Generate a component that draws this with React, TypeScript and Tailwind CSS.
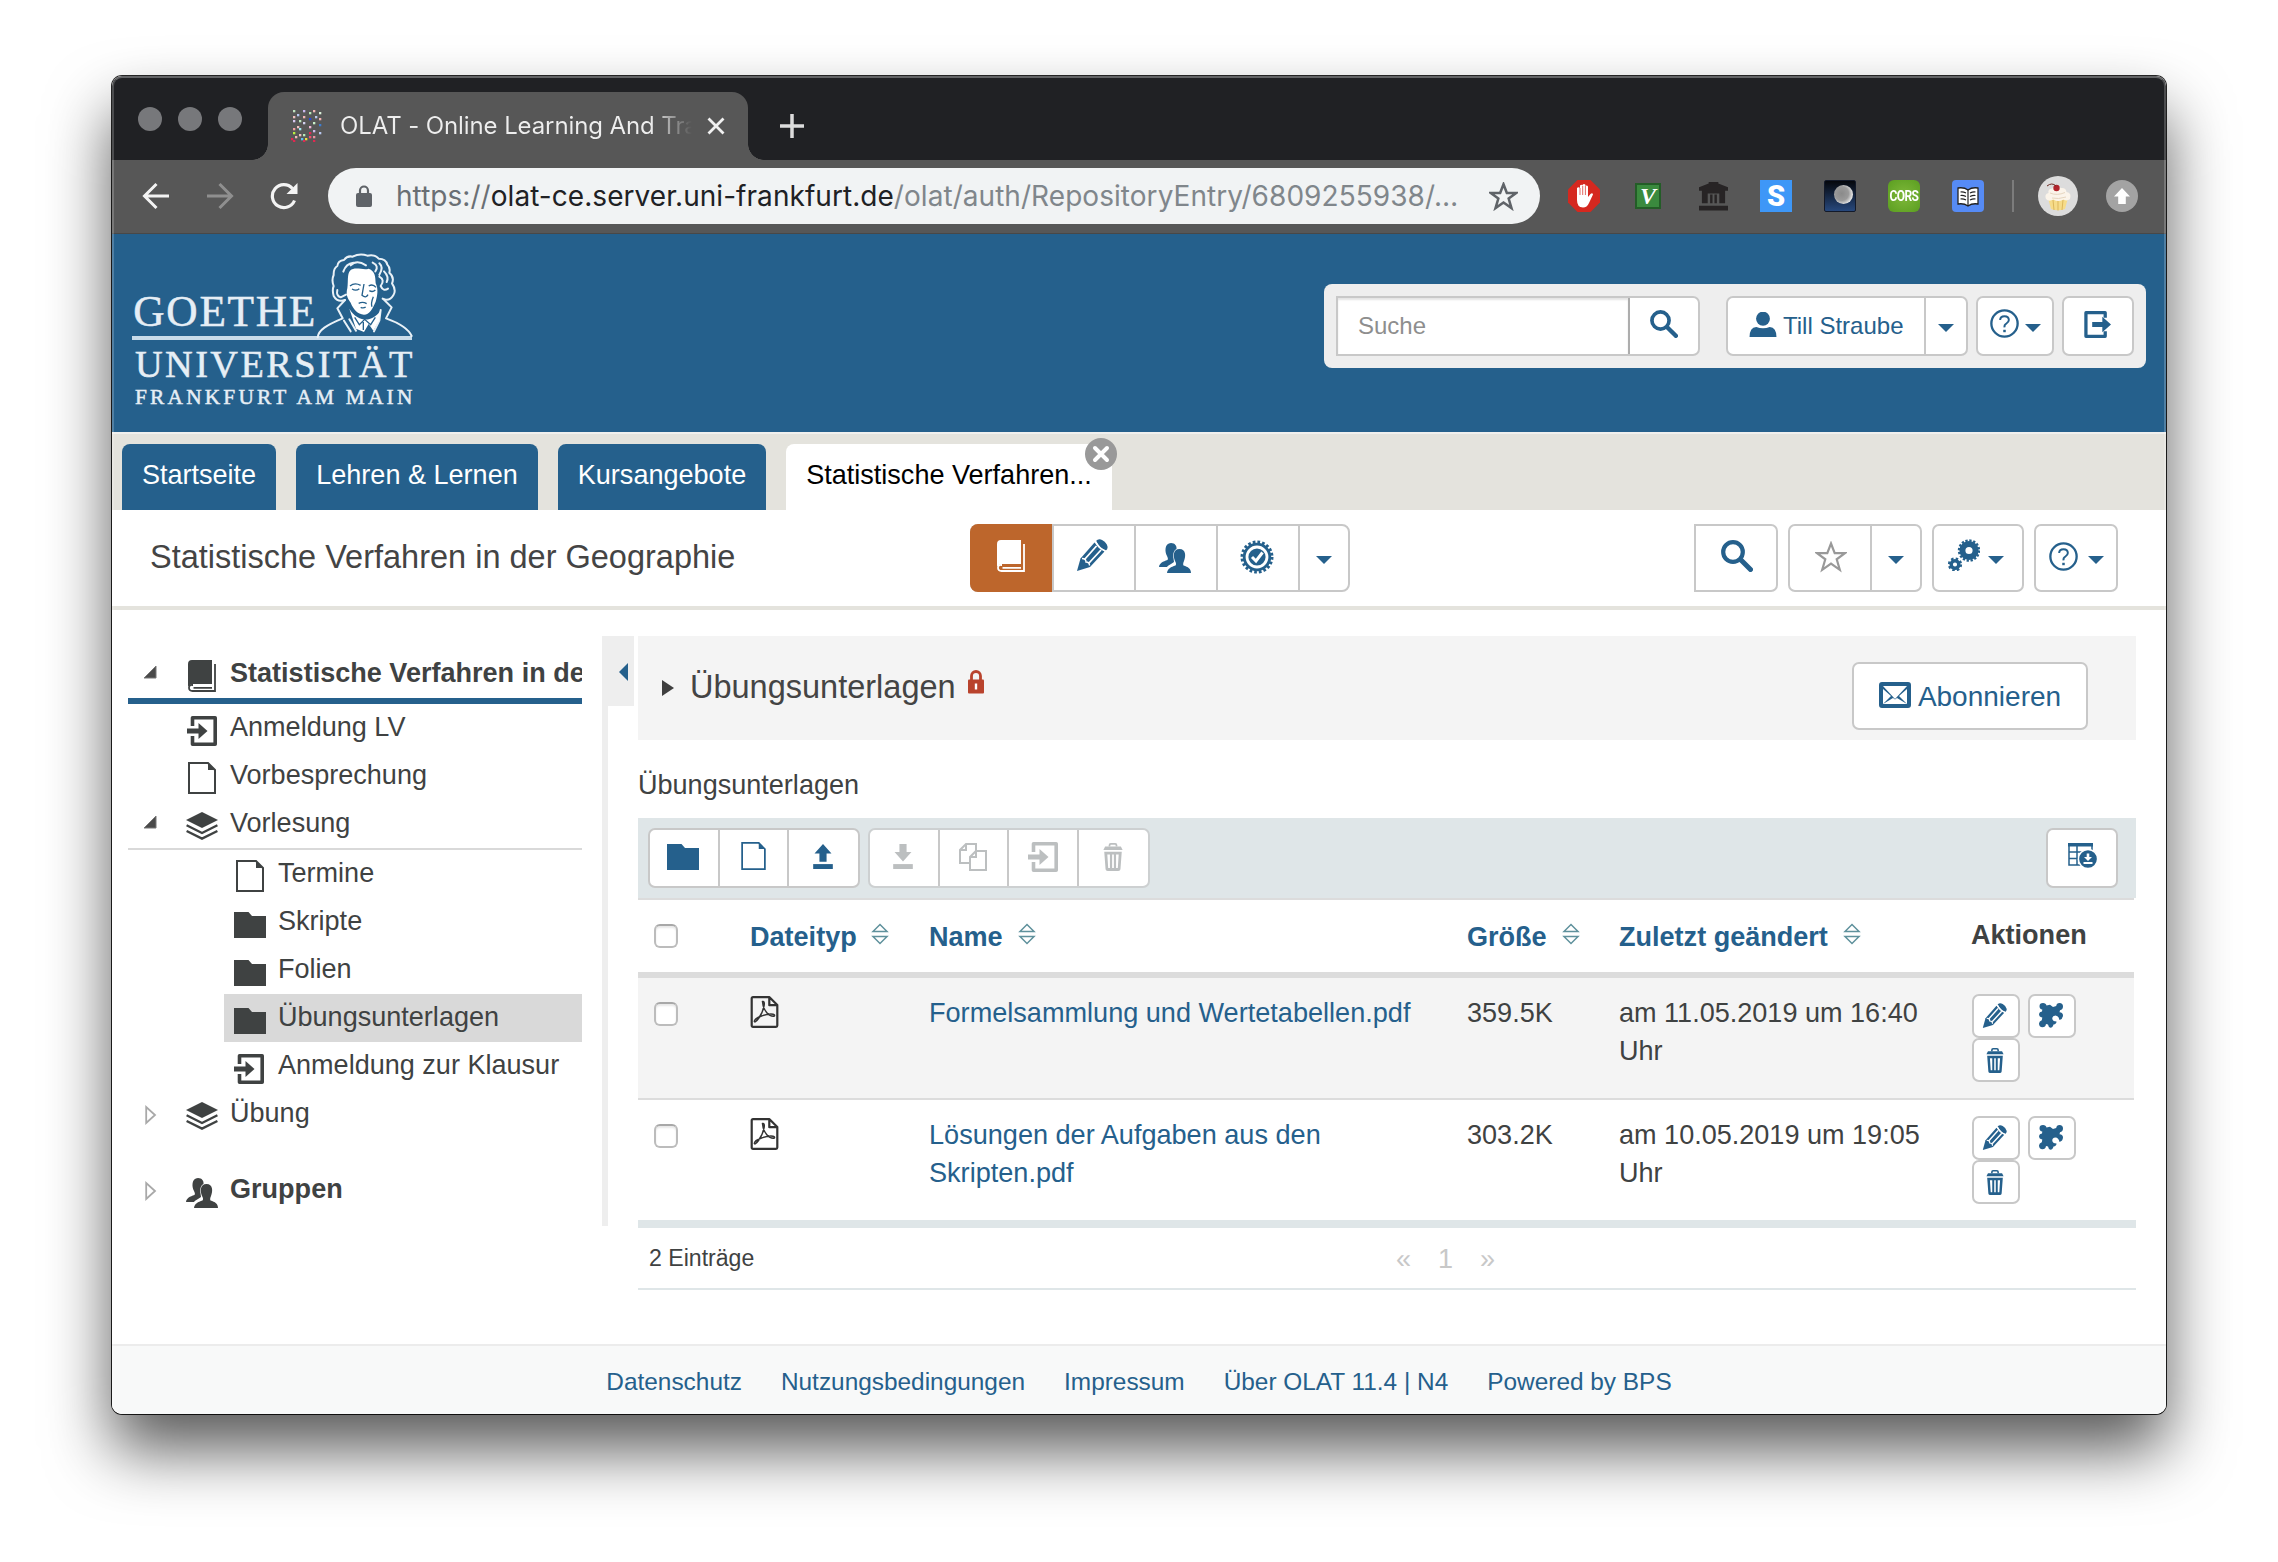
import React from "react";

type P = { className?: string };

const Caret = ({ className = "" }: P) => (
  <svg viewBox="0 0 16 8" className={`h-[8px] w-[16px] shrink-0 fill-[#25608c] ${className}`}>
    <path d="M0 0H16L8 8Z" />
  </svg>
);

const Search = ({ className = "" }: P) => (
  <svg viewBox="0 0 32 32" className={`h-8 w-8 fill-none stroke-[#25608c] ${className}`}>
    <circle cx="12" cy="12" r="9.8" strokeWidth="4.2" />
    <path d="M20.5 20.5L29.5 29.5" strokeWidth="5" strokeLinecap="round" />
  </svg>
);

const Book = ({ className = "" }: P) => (
  <svg viewBox="0 0 28 32" className={`h-8 w-7 ${className}`}>
    <path fill="currentColor" d="M4 0H24V24H4.5Q2 24 0 26.5V4Q0 0 4 0Z" />
    <path fill="none" stroke="currentColor" strokeWidth="1.8" d="M27 4V31H4.5Q1 31 1 27.8T4.5 25H5M5.5 27.8H24" />
  </svg>
);

const Pencil = ({ className = "" }: P) => (
  <svg viewBox="0 0 32 32" className={`h-8 w-8 fill-[#25608c] ${className}`}>
    <path d="M1 32L4.5 19.5L18.5 3.5L28.5 12.5L14 28Z" />
    <path d="M20 2Q22.5-1 26.5 1.2T31.5 7.5Q32 10 29.8 11.5Q25 10.5 20 2Z" />
    <path fill="none" stroke="#fff" strokeWidth="1.8" d="M19.500 2.500Q22 9 29.500 12M8.500 20.500L20.500 7M13 24L25 11" />
    <path fill="none" stroke="#fff" strokeWidth="1.4" d="M6 19.5Q10 19.5 10 23Q13.5 23 13.5 26.5" />
  </svg>
);

const People = ({ className = "" }: P) => (
  <svg viewBox="0 0 32 30" className={`h-[30px] w-8 ${className}`} fill="currentColor">
    <path d="M12 0C16 0 18 3 17.5 6C14 8 14 12 14.5 15.5L15 19C12 21 9 22.5 8 24H0C.5 20 4 18.5 8.5 17C9.5 15.5 8.5 14.500 8 13C5.500 9 5.500 0 12 0Z" />
    <path d="M20.500 6C27 6 27 13 25 18C24 20 24 21.500 24.500 22.500C29 24 32 25.500 32 30H8C8.500 25.500 12 24 16.500 22.500C17.500 21 17 20 16 18C14 13 14 6 20.500 6Z" />
  </svg>
);

const Badge = () => (
  <svg viewBox="0 0 34 34" className="mb-[2px] h-[34px] w-[34px]">
    <circle cx="17" cy="17" r="15" fill="none" stroke="#25608c" strokeWidth="3" strokeDasharray="2.7 2.01" />
    <circle cx="17" cy="17" r="12.800" fill="none" stroke="#25608c" strokeWidth="2.800" />
    <circle cx="17" cy="17" r="8.600" fill="#25608c" />
    <path d="M12 17L16 21L22.500 12.500" fill="none" stroke="#fff" strokeWidth="3" />
  </svg>
);

const Help = () => (
  <svg viewBox="0 0 30 30" className="h-[29px] w-[29px] fill-none stroke-[#25608c]">
    <circle cx="15" cy="15" r="13.600" strokeWidth="2.400" />
    <path d="M10.500 11.500Q10.500 7.500 15 7.500T19.500 11.500Q19.500 13.500 17 15T15 19" strokeWidth="2" />
    <path d="M15 21.500V24" strokeWidth="2.600" />
  </svg>
);

const Gears = () => (
  <svg viewBox="0 0 32 32" className="h-8 w-8 fill-none stroke-[#25608c]">
    <circle cx="21" cy="11.500" r="6.600" strokeWidth="6" />
    <circle cx="21" cy="11.500" r="10" strokeWidth="2.400" strokeDasharray="2.3 1.627" />
    <circle cx="7" cy="25.500" r="3.800" strokeWidth="3.400" />
    <circle cx="7" cy="25.500" r="6" strokeWidth="2.200" strokeDasharray="2.5 2.212" />
  </svg>
);

const Star = ({ className = "" }: P) => (
  <svg viewBox="0 0 32 32" className={`fill-none ${className}`}>
    <path d="M16 2.500L19.700 12.200H30L21.700 18.300L24.800 28.800L16 22.600L7.200 28.800L10.300 18.300L2 12.200H12.300Z" />
  </svg>
);

const Enter = ({ className = "" }: P) => (
  <svg viewBox="0 0 30 30" className={`h-[30px] w-[30px] ${className}`}>
    <path fill="none" stroke="currentColor" strokeWidth="3.600" strokeLinejoin="round" d="M5.500 10V1.800H28.200V28.200H5.500V20" />
    <path fill="currentColor" d="M0 12.500H11.500V7L20.500 15L11.500 23V17.500H0Z" />
  </svg>
);

const Exit = () => (
  <svg viewBox="0 0 28 28" className="h-[27px] w-[27px]">
    <path fill="none" stroke="#25608c" strokeWidth="3.400" strokeLinejoin="round" d="M22 7V1.700H2V26.300H22V21" />
    <path fill="#25608c" d="M8.500 11.500H19V6L28 14L19 22V16.500H8.500Z" />
  </svg>
);

const FileIcon = ({ className = "" }: P) => (
  <svg viewBox="0 0 28 32" className={`h-8 w-7 ${className}`}>
    <path fill="none" stroke="currentColor" strokeWidth="2" d="M1 1H20L27 8V31H1Z" />
    <path fill="currentColor" d="M20 1V8H27Z" />
  </svg>
);

const Folder = ({ className = "" }: P) => (
  <svg viewBox="0 0 32 26" preserveAspectRatio="none" className={`h-[26px] w-8 ${className}`}>
    <path fill="currentColor" d="M0 0H14.500L18 4H32V26H0Z" />
  </svg>
);

const Layers = () => (
  <svg viewBox="0 0 32 28" className="h-7 w-8" fill="currentColor">
    <path d="M16 0L32 8L16 16L0 8Z" />
    <path fill="none" stroke="currentColor" strokeWidth="2.300" d="M.6 13.300L16 21L31.400 13.300M.6 19L16 26.600L31.400 19" />
  </svg>
);

const Trash = ({ className = "" }: P) => (
  <svg viewBox="0 0 22 32" className={className}>
    <path fill="none" stroke="currentColor" strokeWidth="2" d="M7 4V2.500Q7 1 8.500 1H13.500Q15 1 15 2.500V4" />
    <path fill="currentColor" d="M2 4H20L22 8H0Z" />
    <path fill="currentColor" fillRule="evenodd" d="M1 10H21L19.500 30Q19.300 32 17 32H5Q2.700 32 2.500 30ZM4.500 13L5.500 28.500H7.500V13ZM10 13V28.500H12V13ZM14.500 13V28.500H16.500L17.500 13Z" />
  </svg>
);

const Transfer = ({ className = "" }: P) => (
  <svg viewBox="0 0 22 28" className={`h-[25px] w-[22px] fill-current ${className}`}>
    <path d="M0 22.500H22V28H0Z" />
    <path d="M11 0L20.500 10.500H15V20H7V10.500H1.500Z" />
  </svg>
);

const Download = () => (
  <svg viewBox="0 0 22 28" className="mr-[1px] mb-[3px] h-[25px] w-[22px] fill-current">
    <path d="M0 22.500H22V28H0Z" />
    <path d="M7 0H15V9H20.500L11 19.500L1.500 9H7Z" />
  </svg>
);

const Copy = () => (
  <svg viewBox="0 0 28 28" className="mb-[3px] h-[28px] w-[28px] fill-none stroke-current" strokeWidth="2">
    <path d="M11 20H1V7L7 1H17V8M1 7H7V1" />
    <path d="M17 8H27V27H11V14L17 8V14H11" />
  </svg>
);

const TableDown = () => (
  <svg viewBox="0 0 30 26" className="ml-[1px] h-[26px] w-[30px]">
    <path fill="none" stroke="#25608c" strokeWidth="1.500" d="M1 1V22H15M1 9H24M1 15.500H15M9 2V22M24 1V8" />
    <path fill="#25608c" d="M0 0H25V3.500H0Z" />
    <circle cx="20" cy="16" r="9.600" fill="#25608c" stroke="#fff" strokeWidth="1.500" />
    <path fill="#fff" d="M18.700 10.500H21.300V14H24L20 18L16 14H18.700ZM15.500 19H24.500V21H15.500Z" />
  </svg>
);

const Puzzle = () => (
  <svg viewBox="0 0 24 25" className="h-[25px] w-[24px] fill-[#25608c]">
    <path d="M.5 3.200Q.5 0 4 0Q7 0 7.500 2.500L11 1.800L14 4L17.200 3Q17.500 0 20.500 0Q24 0 24 3.500Q24 6.500 21 7.300L20.500 9.300Q24 9.500 24 12.500Q23.800 16 20.500 17Q19.500 12.500 16.500 12.500Q13 12.800 13.300 16Q14 18.500 17.500 18.500Q17.500 21 14.500 21.500Q13.500 24.800 11.500 24.800Q9.500 24.500 9 21.500L7 21Q6.500 24.300 3.500 24.300Q0 24 0 20.500Q.2 18 2.800 17.200L3.300 14.500Q0 14 0 11Q.3 8.800 3 8.500L3.300 6.500Q.5 6 .5 3.200Z" />
  </svg>
);

const Pdf = () => (
  <svg viewBox="0 0 28 32" className="h-8 w-[29px] fill-none stroke-[#333]">
    <path strokeWidth="2.200" strokeLinejoin="round" d="M1.200 2.500Q1.200 1.200 2.500 1.200H19L26.800 9V29.500Q26.800 30.800 25.500 30.800H2.500Q1.200 30.800 1.200 29.500ZM18.800 1.500V9.200H26.500" />
    <path strokeWidth="1.500" d="M12 5.500Q14.500 5 13.500 10Q12.500 16 8 22.500Q4.500 27 3.800 25.500Q4 22.500 11 20Q18 17.500 22.500 18.200Q25 19 23.500 20.200Q19.500 20.500 16.500 17Q12.500 12.500 12 5.500Z" />
  </svg>
);

const Sort = ({ className = "" }: P) => (
  <svg viewBox="0 0 18 22" className={`h-[22px] w-[18px] shrink-0 fill-none stroke-[#5f919c] ${className}`} strokeWidth="1.500">
    <path d="M2 8.500L9 1.500L16 8.500ZM2 13.500H16L9 20.500Z" />
  </svg>
);

const Check = () => (
  <div className="h-6 w-6 rounded-[6px] border-2 border-[#bcbcbc] border-t-[#a8a8a8] bg-white shadow-[inset_0_2px_2px_#e8e8e8]" />
);

const Logo = () => (
  <svg viewBox="96 72 840 450" className="h-[150px] w-[280px] overflow-visible" fill="#fff" fontFamily="'Liberation Serif', serif">
    <g fill="#e6eef5" stroke="#e6eef5" strokeWidth="1.500">
      <text x="100" y="288" fontSize="130" textLength="546">GOETHE</text>
      <text x="105" y="441" fontSize="115" textLength="832">UNIVERSITÄT</text>
      <text x="105" y="521" fontSize="64" textLength="832">FRANKFURT AM MAIN</text>
    </g>
    <path d="M96 318H936V330H96Z" fill="#c9dcea" />
    <g fill="none" stroke="#e9f1f7" strokeWidth="6" strokeLinecap="round" strokeLinejoin="round">
      <path d="M653 322C655 300 680 285 728 265L712 235L735 210M935 318C925 295 900 280 858 265L875 232L850 207" />
      <path d="M735 210Q712 218 701 198Q696 180 701 168Q694 150 701 135Q700 115 712 108Q714 92 732 90Q742 76 758 80Q780 68 802 77Q825 72 836 86Q858 86 862 104Q872 114 868 128Q884 142 876 160Q890 180 880 196Q868 216 848 206" />
      <path d="M730 125Q738 100 760 98M752 106Q770 88 798 106M818 98Q838 108 826 124M838 100Q852 112 838 134M838 140Q856 150 842 168Q850 186 864 176M852 124Q868 140 860 156M712 180Q708 198 722 202L738 194" />
      <path d="M732 272L752 304M748 268L768 302M842 240L838 272L822 304" />
    </g>
    <path d="M750 122C765 108 790 122 806 116C826 124 826 140 827 160C836 178 832 198 827 215C818 236 808 254 792 254C772 252 760 238 752 218C740 204 738 190 742 175C745 150 741 134 750 122Z" />
    <path d="M748 236C762 262 790 272 806 268C826 262 838 250 842 238L838 270L820 302L806 282L792 306L768 296Z" />
    <g fill="none" stroke="#25608c" strokeWidth="4">
      <path d="M750 168Q764 156 782 166M756 177Q768 184 778 176M806 168Q818 160 828 172M808 182Q818 188 826 180M792 162L786 196Q798 206 804 194M776 220Q788 214 800 221M782 232Q790 236 797 231M820 200Q812 220 816 230M764 262L778 284L794 268L812 284L826 262M790 276V300" />
    </g>
  </svg>
);

const favDots: [number, number, string][] = [
  [2, 0, "#bfe3bf"], [12, 0, "#c9b8f0"], [22, 0, "#f3b6b6"], [18, 2, "#b8e8b8"], [6, 4, "#b8c8f0"], [28, 2, "#d9f0d9"],
  [2, 6, "#f0c0c0"], [12, 6, "#f3b6b6"], [24, 6, "#b8c8f0"], [18, 8, "#2846d8"], [28, 8, "#f0b0b0"], [2, 10, "#d8c8f0"],
  [8, 10, "#c0e8c0"], [22, 12, "#c8f0c8"], [12, 12, "#d0d0f0"], [28, 14, "#3f7fd0"], [6, 16, "#f0c0c0"], [2, 18, "#f0a0a0"],
  [8, 18, "#a0e8f0"], [18, 16, "#f0b8d8"], [2, 22, "#b8f040"], [8, 24, "#f0c0c0"], [12, 24, "#b8e8b8"], [18, 22, "#e02850"],
  [22, 20, "#d0b8f0"], [28, 22, "#b8c8f0"], [4, 26, "#f0b8b8"], [14, 28, "#f0e040"], [18, 26, "#f05070"], [0, 28, "#e02850"],
  [2, 30, "#e02850"], [12, 30, "#e02850"], [22, 30, "#e02850"], [10, 28, "#60c0f0"], [22, 26, "#f090a0"],
];

const cell = "flex w-16 items-center justify-center";

function Chrome() {
  return (
    <>
      <div className="flex h-[84px] shrink-0 bg-[#202124]">
        <div className="flex w-[156px] gap-4 pt-[31px] pl-[26px]">
          <i className="size-6 rounded-full bg-[#77787b]" />
          <i className="size-6 rounded-full bg-[#77787b]" />
          <i className="size-6 rounded-full bg-[#77787b]" />
        </div>
        <div className="relative mt-4 flex h-[68px] w-[480px] items-center rounded-t-[16px] bg-[#575757] pl-[23px]">
          <i className="absolute bottom-0 -left-4 size-4 bg-[radial-gradient(circle_at_0_0,#202124_15.500px,#575757_16px)]" />
          <i className="absolute -right-4 bottom-0 size-4 bg-[radial-gradient(circle_at_100%_0,#202124_15.500px,#575757_16px)]" />
          <svg viewBox="0 0 32 32" className="h-8 w-8">
            {favDots.map(([x, y, c], i) => (
              <rect key={i} x={x} y={y} width="2.300" height="2.300" fill={c} />
            ))}
          </svg>
          <div className="ml-[17px] w-[352px] overflow-hidden bg-[linear-gradient(90deg,#eee_310px,#eee0_352px)] bg-clip-text font-[Inter] text-[24px] leading-[40px] tracking-[-0.1px] whitespace-nowrap text-transparent">
            OLAT - Online Learning And Training
          </div>
          <svg viewBox="0 0 18 18" className="ml-[15px] h-[18px] w-[18px] stroke-[#f1f1f1]" strokeWidth="2.800">
            <path d="M1.500 1.500L16.500 16.500M16.500 1.500L1.500 16.500" />
          </svg>
        </div>
        <svg viewBox="0 0 24 24" className="mt-[38px] ml-8 h-6 w-6 stroke-[#dcdcdc]" strokeWidth="3.500">
          <path d="M12 0V24M0 12H24" />
        </svg>
      </div>
      <div className="flex h-[74px] shrink-0 items-start border-b border-[#484848] bg-[#575757] pt-2">
        <div className="flex h-14 w-[216px] items-center pl-[30px]">
          <svg viewBox="0 0 28 28" className="h-7 w-7 fill-none stroke-[#f3f3f3]" strokeWidth="3">
            <path d="M27 14H3M14.500 2L2.500 14L14.500 26" />
          </svg>
          <svg viewBox="0 0 28 28" className="ml-9 h-7 w-7 fill-none stroke-[#8f8f8f]" strokeWidth="3">
            <path d="M1 14H25M13.500 2L25.500 14L13.500 26" />
          </svg>
          <svg viewBox="0 0 28 28" className="ml-9 h-7 w-7 fill-none stroke-[#f3f3f3]" strokeWidth="3.200">
            <path d="M24.500 18.500A11.500 11.500 0 1 1 22.500 6.500" />
            <path d="M27.500 1V12H16.500Z" fill="#f3f3f3" stroke="none" />
          </svg>
        </div>
        <div className="flex h-14 w-[1212px] items-center rounded-full bg-[#f1f3f4] pl-[27px]">
          <svg viewBox="0 0 18 22" className="h-[22px] w-[18px]">
            <rect x="1" y="8" width="16" height="14" rx="2" fill="#5f6368" />
            <path d="M5 9V5.500A4 4 0 0 1 13 5.500V9" fill="none" stroke="#5f6368" strokeWidth="2.200" />
          </svg>
          <div className="ml-[23px] w-[1080px] font-[Inter] text-[28px] leading-[54px] tracking-[0.05px] whitespace-nowrap text-[#80868b]">
            <span className="text-[#6a6f74]">https://</span>
            <span className="text-[#202124]">olat-ce.server.uni-frankfurt.de</span>/olat/auth/RepositoryEntry/6809255938/…
          </div>
          <Star className="ml-[13px] h-[29px] w-[29px] stroke-[#5f6368] stroke-[2.800]" />
        </div>
        <div className="ml-3 flex h-14 items-center">
          <div className={cell}>
            <svg viewBox="0 0 32 32" className="h-8 w-8">
              <path d="M9.500 0H22.500L32 9.500V22.500L22.500 32H9.500L0 22.500V9.500Z" fill="#d5281f" />
              <path d="M9 8Q10.500 6.500 12 8V5.500Q13.300 4 14.600 5.500V4.800Q16 3.300 17.400 4.800V6Q19 5 20 6.500V17L22.500 14Q24.500 12.500 25 14.500L21 23Q19 27.500 15 27.500Q9 27.500 9 20Z" fill="#fff" />
              <path d="M12 8V15M14.700 6V15M17.400 6V15" stroke="#d5281f" strokeWidth=".7" />
            </svg>
          </div>
          <div className={cell}>
            <div className="flex size-[26px] items-center justify-center border-2 border-[#235d27] bg-[#3a8a3e] font-['Liberation_Serif'] text-[24px] leading-none font-bold text-white italic">V</div>
          </div>
          <div className={cell}>
            <svg viewBox="0 0 32 30" className="ml-[2px] h-[29px] w-[31px] fill-[#272425]">
              <path d="M1 5.500L11 1.500V0H21V1.500L31 5.500V9H1ZM4 9H10V22H4ZM10 9H22V12H10ZM12.500 13H15V22H12.500ZM17 13H19.500V22H17ZM22 9H28V22H22ZM1 24.500H31V29.500H1Z" />
            </svg>
          </div>
          <div className={cell}>
            <div className="flex size-8 items-center justify-center bg-[#3e97f7] font-['Roboto'] text-[29px] leading-none font-black text-white">S</div>
          </div>
          <div className={cell}>
            <div className="flex size-8 items-center justify-center rounded-[2px] border border-[#131a2a] bg-[linear-gradient(#05070c,#27487c)] pl-[6px] pb-1">
              <i className="size-[19px] rounded-full bg-[radial-gradient(circle_at_40%_45%,#8a8a8a_0,#9a9a9a_45%,#eee_75%)]" />
            </div>
          </div>
          <div className={cell}>
            <div className="flex size-8 items-center justify-center rounded-[6px] bg-[radial-gradient(#7fb83a,#5a9e20)]">
              <span className="scale-y-125 font-['Roboto'] text-[12px] leading-none font-bold tracking-[-0.6px] text-white">CORS</span>
            </div>
          </div>
          <div className={cell}>
            <svg viewBox="0 0 32 32" className="h-8 w-8">
              <rect width="32" height="32" rx="4" fill="#568bf5" />
              <path d="M6 8Q12 7 16 10Q20 7 26 8V24Q20 23 16 26Q12 23 6 24Z" fill="#fff" stroke="#222" strokeWidth="1.300" />
              <path d="M16 10V26M8.500 12Q11 11.500 14 13M8.500 15.500Q11 15 14 16.500M8.500 19Q11 18.500 14 20M23.500 12Q21 11.500 18 13M23.500 15.500Q21 15 18 16.500M23.500 19Q21 18.500 18 20" fill="none" stroke="#222" strokeWidth="1.200" />
            </svg>
          </div>
          <i className="ml-3 h-8 w-[2px] bg-[#7c7c7c]" />
          <svg viewBox="0 0 40 40" className="ml-6 h-10 w-10">
            <circle cx="20" cy="20" r="20" fill="#dcdcdc" />
            <path d="M10 22H30L27 33Q20 35.500 13 33Z" fill="#f6dc8a" />
            <path d="M15 24L16 34M20 25V34.500M25 24L24 34" stroke="#dcb75c" strokeWidth="1" />
            <path d="M8 23Q6 18 10.500 17Q9.500 13 14 12.500Q18 9 23 12Q28 11.500 28.500 16Q34 17 32 23Q29 25.500 25.500 23.500Q20 26.500 15.500 23.500Q11 26 8 23Z" fill="#fbf4ea" />
            <path d="M12 17Q19 20 27 16.500M14 22Q20 23.500 28 21" fill="none" stroke="#e6d6c0" />
            <circle cx="18.500" cy="12" r="3.200" fill="#b1242c" />
            <path d="M18 10Q14 6 9 10" fill="none" stroke="#6d2b22" />
          </svg>
          <svg viewBox="0 0 32 32" className="ml-[28px] h-8 w-8">
            <circle cx="16" cy="16" r="16" fill="#a3a3a3" />
            <path d="M16 8L24 16.500H19.800V24H12.200V16.500H8Z" fill="#fff" />
          </svg>
        </div>
      </div>
    </>
  );
}

const btn = "flex items-center justify-center rounded-[7px] border-2 border-[#c8c8c8] bg-white";

function Header() {
  return (
    <div className="flex h-[198px] shrink-0 items-start justify-between bg-[#25608c] pr-5 pl-5">
      <div className="pt-5">
        <Logo />
      </div>
      <div className="mt-[50px] flex h-[84px] w-[822px] items-center rounded-[8px] bg-[#eeeeee] pl-3 text-[24px]">
        <div className="flex h-[60px] w-[364px] overflow-hidden rounded-r-[7px] border-2 border-[#c8c8c8] bg-white">
          <div className="-m-[2px] w-[294px] border-2 border-[#adadad] pl-5 leading-[56px] text-[#8e8e8e] shadow-[inset_0_2px_2px_#e4e4e4]">Suche</div>
          <div className="flex flex-1 items-center justify-center">
            <Search className="mb-1 ml-[2px] h-[28px] w-[28px]" />
          </div>
        </div>
        <div className={`${btn} ml-[26px] h-[60px] w-[242px] justify-start text-[#25608c]`}>
          <div className="flex h-full w-[198px] items-center border-r-2 border-[#c8c8c8] pl-[21px]">
            <svg viewBox="0 0 28 26" className="mb-[3px] h-[25px] w-7 fill-current">
              <ellipse cx="14" cy="7" rx="7.200" ry="7.400" />
              <path d="M0 26Q0 16 7 15.500Q14 18.500 21 15.500Q28 16 28 26Z" />
            </svg>
            <span className="ml-[6px]">Till Straube</span>
          </div>
          <Caret className="mt-1 ml-[12px]" />
        </div>
        <div className={`${btn} ml-2 h-[60px] w-[78px]`}>
          <span className="mb-[5px]"><Help /></span>
          <Caret className="mt-1 ml-[6px]" />
        </div>
        <div className={`${btn} ml-2 h-[60px] w-[72px]`}>
          <span className="mr-[2px] mb-[3px]"><Exit /></span>
        </div>
      </div>
    </div>
  );
}

function Tabs() {
  const t = "h-[66px] rounded-t-[8px] text-center leading-[63px] whitespace-nowrap";
  return (
    <div className="flex h-[78px] shrink-0 gap-5 border-t-2 border-[#f0f0ee] bg-[#e4e3dd] pt-[10px] pl-[10px] text-white">
      <div className={`${t} w-[154px] bg-[#25608c]`}>Startseite</div>
      <div className={`${t} w-[242px] bg-[#25608c]`}>Lehren &amp; Lernen</div>
      <div className={`${t} w-[208px] bg-[#25608c]`}>Kursangebote</div>
      <div className={`${t} relative w-[326px] bg-white text-black`}>
        Statistische Verfahren...
        <svg viewBox="0 0 32 32" className="absolute -top-[6px] -right-[5px] h-8 w-8">
          <circle cx="16" cy="16" r="16" fill="#999" />
          <path d="M10 10L22 22M22 10L10 22" stroke="#fff" strokeWidth="4" strokeLinecap="round" />
        </svg>
      </div>
    </div>
  );
}

function TitleBar() {
  const seg = "flex h-full w-[82px] items-center justify-center border-l-2 border-[#c8c8c8]";
  return (
    <div className="flex h-[100px] shrink-0 border-b-4 border-[#e4e3dd] pt-[14px]">
      <div className="w-[858px] pl-[38px] text-[32.5px] leading-[66px] text-[#444]">Statistische Verfahren in der Geographie</div>
      <div className="flex h-[68px] w-[380px] items-center rounded-[8px] border-2 border-[#c8c8c8] text-[#25608c]">
        <div className="-ml-[2px] flex h-[68px] w-[82px] shrink-0 items-center justify-center rounded-l-[8px] bg-[#bd662c] text-white">
          <Book className="mb-1" />
        </div>
        <div className={seg}><Pencil className="mr-1 mb-[6px]" /></div>
        <div className={seg}><People className="mr-[3px]" /></div>
        <div className={seg}><span className="mr-[3px]"><Badge /></span></div>
        <div className="flex h-full flex-1 items-center justify-center border-l-2 border-[#c8c8c8]"><Caret className="mt-1" /></div>
      </div>
      <div className="ml-[344px] flex">
        <div className={`${btn} h-[68px] w-[84px] rounded-l-none pb-1 pl-[1px]`}><Search /></div>
        <div className={`${btn} ml-[10px] h-[68px] w-[134px] justify-start`}>
          <div className="flex h-full w-[82px] items-center justify-center border-r-2 border-[#c8c8c8]">
            <Star className="mb-[2px] ml-[1px] h-8 w-8 stroke-[#999] stroke-[2.200]" />
          </div>
          <Caret className="mt-1 ml-4" />
        </div>
        <div className={`${btn} ml-[10px] h-[68px] w-[92px] pr-1`}>
          <span className="mb-[6px]"><Gears /></span>
          <Caret className="mt-1 ml-2" />
        </div>
        <div className={`${btn} ml-[10px] h-[68px] w-[84px]`}>
          <span className="mb-1"><Help /></span>
          <Caret className="mt-1 ml-[10px]" />
        </div>
      </div>
    </div>
  );
}

function Row({ label, icon, toggle, child, className = "" }: { label: string; icon: React.ReactNode; toggle?: "open" | "closed"; child?: boolean; className?: string }) {
  return (
    <div className={`flex h-[48px] shrink-0 overflow-hidden leading-[47px] whitespace-nowrap ${child ? "ml-24 pl-[10px]" : ""} ${className}`}>
      {!child && (
        <div className="flex w-[58px] shrink-0 pt-[15px] pl-[15px]">
          {toggle === "open" && (
            <svg viewBox="0 0 14 14" className="h-[14px] w-[14px]">
              <path d="M13 1V13H1Z" fill="#4a4a4a" stroke="#777" />
            </svg>
          )}
          {toggle === "closed" && (
            <svg viewBox="0 0 12 20" className="ml-[2px] h-5 w-3">
              <path d="M1.200 2V18L10 10Z" fill="none" stroke="#a9a9a9" strokeWidth="1.800" />
            </svg>
          )}
        </div>
      )}
      <div className="mt-[10px] flex h-8 w-8 shrink-0 items-center justify-center">{icon}</div>
      <span className="ml-3">{label}</span>
    </div>
  );
}

function Sidebar() {
  return (
    <div className="mt-10 ml-4 flex w-[454px] flex-col text-[#3f4242]">
      <Row label="Statistische Verfahren in der Geographie" icon={<Book />} toggle="open" className="box-content border-b-[6px] border-[#25608c] font-bold" />
      <Row label="Anmeldung LV" icon={<Enter className="mt-[2px]" />} />
      <Row label="Vorbesprechung" icon={<FileIcon />} />
      <Row label="Vorlesung" icon={<Layers />} toggle="open" className="box-content border-b-2 border-[#d9d9d9]" />
      <Row child label="Termine" icon={<FileIcon />} />
      <Row child label="Skripte" icon={<Folder className="mt-[2px]" />} />
      <Row child label="Folien" icon={<Folder className="mt-[2px]" />} />
      <Row child label="Übungsunterlagen" icon={<Folder className="mt-[2px]" />} className="bg-[#d9d9d9]" />
      <Row child label="Anmeldung zur Klausur" icon={<Enter className="mt-[2px] mr-[2px]" />} />
      <Row label="Übung" icon={<Layers />} toggle="closed" />
      <Row label="Gruppen" icon={<People className="mt-[2px]" />} toggle="closed" className="mt-7 font-bold" />
    </div>
  );
}

const cols = "grid grid-cols-[112px_179px_538px_152px_352px_163px]";

function FileRow({ name, size, date, className }: { name: string; size: string; date: string; className: string }) {
  const b = "flex h-[44px] w-[48px] items-center justify-center rounded-[7px] border-2 border-[#c8c8c8] bg-white text-[#25608c]";
  return (
    <div className={`${cols} mr-[2px] pt-4 leading-[38px] ${className}`}>
      <div className="pt-2 pl-4"><Check /></div>
      <div className="pt-[2px]"><Pdf /></div>
      <div className="max-w-[500px] text-[27.1px] text-[#25608c]">{name}</div>
      <div>{size}</div>
      <div className="max-w-[320px]">{date}</div>
      <div className="flex w-[112px] flex-wrap content-start gap-x-2 pl-[1px]">
        <div className={b}><Pencil className="mr-[3px] mb-[2px] h-[25px] w-[25px]" /></div>
        <div className={b}><span className="mr-[3px] mb-[2px]"><Puzzle /></span></div>
        <div className={b}><Trash className="mr-[2px] h-[25px] w-[18px]" /></div>
      </div>
    </div>
  );
}

function Main() {
  const s = "flex h-full w-[70px] items-center justify-center border-r-2 border-[#c8c8c8] last:border-r-0";
  return (
    <div className="mt-[26px] ml-1 flex w-[1498px] flex-col">
      <div className="flex h-[104px] shrink-0 items-start bg-[#f4f4f4]">
        <svg viewBox="0 0 12 16" className="mt-[44px] ml-6 h-4 w-3 fill-[#3f3f3f]"><path d="M0 0L12 8L0 16Z" /></svg>
        <span className="ml-4 text-[32.5px] leading-[102px] text-[#444]">Übungsunterlagen</span>
        <svg viewBox="0 0 16 24" className="mt-[34px] ml-[12px] h-6 w-4">
          <path d="M3.500 11V6A4.500 4.500 0 0 1 12.500 6V11" fill="none" stroke="#b9432d" strokeWidth="2.800" />
          <rect y="9.500" width="16" height="14" rx="1" fill="#b9432d" />
          <path d="M8 13.500V19.500" stroke="#fff" strokeWidth="2.400" />
        </svg>
        <div className={`${btn} mt-[26px] mr-12 ml-auto h-[68px] w-[236px] text-[28px] text-[#25608c]`}>
          <svg viewBox="0 0 32 26" className="mb-[3px] h-[26px] w-8">
            <rect x="2" y="2" width="28" height="22" rx="1" fill="none" stroke="currentColor" strokeWidth="4" />
            <path d="M4 4L16 17L28 4V7L20 14L28 22L18 16L16 17.500L14 16L4 22L12 14L4 7Z" fill="currentColor" />
          </svg>
          <span className="mt-[2px] ml-[7px]">Abonnieren</span>
        </div>
      </div>
      <div className="h-[78px] shrink-0 pt-[10px] leading-[70px]">Übungsunterlagen</div>
      <div className="flex h-[80px] shrink-0 bg-[#dfe6e8] px-[10px] pt-[10px]">
        <div className={`${btn} h-[60px] w-[212px] justify-start text-[#25608c]`}>
          <div className={`${s} w-[71px]`}><Folder className="mr-[2px] mb-[2px] h-[23px] w-7" /></div>
          <div className={s}><FileIcon className="mb-1 h-[28px] w-[25px]" /></div>
          <div className={s}><Transfer className="mr-[2px] mb-[3px]" /></div>
        </div>
        <div className={`${btn} ml-2 h-[60px] w-[282px] justify-start border-[#cdd0d1] bg-[#f3f6f7] text-[#bcbfc0]`}>
          <div className={s}><Download /></div>
          <div className={s}><Copy /></div>
          <div className={s}><Enter className="mb-[3px] h-[27px] w-[27px]" /></div>
          <div className={s}><Trash className="mb-[3px] h-[28px] w-[22px]" /></div>
        </div>
        <div className={`${btn} mr-2 ml-auto h-[60px] w-[72px] pb-1`}><TableDown /></div>
      </div>
      <div className={`${cols} mr-[2px] h-[80px] shrink-0 border-t-2 border-b-[6px] border-[#dcdcdc] leading-[74px] font-bold text-[#25608c]`}>
        <div className="pt-6 pl-4"><Check /></div>
        <div className="flex">Dateityp<Sort className="mt-[23px] ml-[14px]" /></div>
        <div className="flex">Name<Sort className="mt-[23px] ml-[15px]" /></div>
        <div className="flex">Größe<Sort className="mt-[23px] ml-[15px]" /></div>
        <div className="flex">Zuletzt geändert<Sort className="mt-[23px] ml-[15px]" /></div>
        <div className="leading-[70px] text-[#3f4242]">Aktionen</div>
      </div>
      <FileRow name="Formelsammlung und Wertetabellen.pdf" size="359.5K" date="am 11.05.2019 um 16:40 Uhr" className="h-[122px] shrink-0 border-b-2 border-[#dcdcdc] bg-[#f4f4f4]" />
      <FileRow name="Lösungen der Aufgaben aus den Skripten.pdf" size="303.2K" date="am 10.05.2019 um 19:05 Uhr" className="h-[120px] shrink-0" />
      <div className="grid h-[70px] shrink-0 grid-cols-[757px_1fr] items-center border-t-8 border-b-2 border-[#dfe6e8]">
        <span className="pl-[11px] text-[23.1px]">2 Einträge</span>
        <div className="flex gap-[27px] pt-[2px] pl-[1px] text-[#c8c8c8]">
          <span>«</span>
          <span>1</span>
          <span>»</span>
        </div>
      </div>
    </div>
  );
}

export default function App() {
  return (
    <div className="h-[1562px] w-[2278px] overflow-hidden bg-white pt-[76px] pl-[112px] font-['Liberation_Sans',Arial,sans-serif] text-[27.05px] text-[#3f4242]">
      <div className="relative h-[1338px] w-[2054px] rounded-[10px] shadow-[0_0_0_1px_rgba(0,0,0,0.85),0_36px_64px_rgba(0,0,0,0.65)]">
        <div className="flex h-full flex-col overflow-hidden rounded-[10px] bg-white">
          <Chrome />
          <Header />
          <Tabs />
          <TitleBar />
          <div className="flex h-[734px] shrink-0">
            <Sidebar />
            <div className="mt-[26px] ml-5 flex h-[590px] w-8">
              <div className="w-[6px] bg-[#eeeeee]" />
              <div className="flex h-[70px] w-[26px] items-center bg-[#eeeeee] pt-[1px] pl-[11px]">
                <svg viewBox="0 0 9 18" className="h-[18px] w-[9px] fill-[#25608c]"><path d="M9 0V18L0 9Z" /></svg>
              </div>
            </div>
            <Main />
          </div>
          <div className="flex h-[70px] shrink-0 justify-center gap-[39px] border-t-2 border-[#ececec] bg-[#f8f9f9] text-[24.4px] leading-[71px] text-[#25608c]">
            <span>Datenschutz</span>
            <span>Nutzungsbedingungen</span>
            <span>Impressum</span>
            <span>Über OLAT 11.4 | N4</span>
            <span>Powered by BPS</span>
          </div>
        </div>
        <div className="pointer-events-none absolute inset-0 rounded-[10px] border-x-2 border-t-2 border-x-white/20 border-t-white/30" />
      </div>
    </div>
  );
}
